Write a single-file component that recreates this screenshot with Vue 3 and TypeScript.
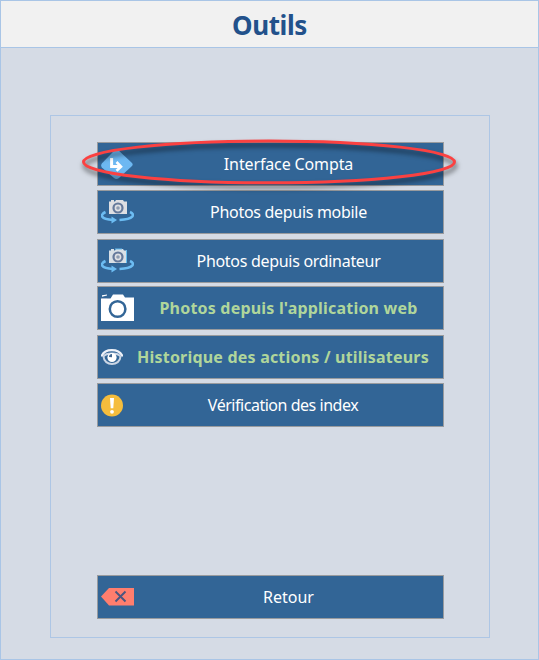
<script setup lang="ts">
interface Tool {
  id: string
  label: string
  icon: 'route' | 'sync' | 'camera' | 'eye' | 'alert'
  strong?: boolean
}

const tools: Tool[] = [
  { id: 'compta', label: 'Interface Compta', icon: 'route' },
  { id: 'mobile', label: 'Photos depuis mobile', icon: 'sync' },
  { id: 'ordinateur', label: 'Photos depuis ordinateur', icon: 'sync' },
  { id: 'web', label: "Photos depuis l'application web", icon: 'camera', strong: true },
  { id: 'historique', label: 'Historique des actions / utilisateurs', icon: 'eye', strong: true },
  { id: 'index', label: 'Vérification des index', icon: 'alert' },
]
</script>

<template>
  <main class="window">
    <header class="title"><h1>Outils</h1></header>
    <section class="panel">
      <nav class="tools">
        <button v-for="tool in tools" :key="tool.id" type="button" class="btn" :class="[tool.id, { strong: tool.strong }]">
          <svg v-if="tool.icon === 'route'" class="icon" viewBox="0 0 33 33">
            <path d="M13.6 2.3Q15.5.7 17.4 2.3L31 15Q32.4 16.500 31 18L18 30Q15.500 32 13 30L.8 19.500Q-.5 17.500.8 15.500Z" fill="#6db8f2" />
            <path d="M10.600 10v8.500h9" fill="none" stroke="#fff" stroke-width="3" />
            <path d="M15.500 14l4.500 4.600-4.500 4.200" fill="none" stroke="#fff" stroke-width="2.600" />
          </svg>
          <svg v-else-if="tool.icon === 'sync'" class="icon" viewBox="0 0 33 33">
            <path d="M8 5.500h2V4h3v1.500h1L15 4h7l1 1.500h3V18H8Z" :fill="tool.id === 'mobile' ? '#dedfe3' : '#d9e0e6'" />
            <path v-if="tool.id === 'ordinateur'" d="M14 4h7M25.500 5v13" stroke="#65bdf0" fill="none" />
            <circle cx="17" cy="12" r="4.500" fill="#dedfe3" stroke="#65799b" stroke-width="2.200" />
            <circle cx="17" cy="12" r="1.800" fill="#8e9cb2" />
            <path d="M4.500 16C-1.500 19-.5 23 12 24M29 16C34.500 18.500 33 23 18.500 24" fill="none" stroke="#6cbcf2" stroke-width="2.600" />
            <path d="M10.500 20.500L16 24l-5.500 3.500Z" fill="#6cbcf2" />
          </svg>
          <svg v-else-if="tool.icon === 'camera'" class="icon" viewBox="0 0 33 33">
            <path d="M0 6.500h9.500L12 2.500h10L24 5.500h9V29H0Z" fill="#fff" />
            <path d="M1 3.300l5-.9v1.200L1 4.800Z" fill="#fff" />
            <path d="M1 6.500h5" stroke="#aab8d0" />
            <circle cx="16.600" cy="17" r="7.800" fill="#fff" stroke="#326596" stroke-width="2.500" />
          </svg>
          <svg v-else-if="tool.icon === 'eye'" class="icon narrow" viewBox="0 0 22 33">
            <path d="M.9 14.500C4 7.300 17.500 7.300 21.100 14.500" fill="none" stroke="#eef1f8" stroke-width="2.200" stroke-linecap="round" />
            <path d="M2.500 15.500C5 11.500 17 11.500 19.500 15.500C19 25.500 3 25.500 2.500 15.500Z" fill="none" stroke="#cbd6e5" stroke-width="2" />
            <circle cx="11" cy="16.500" r="4.600" fill="#fff" />
            <path d="M11 16.300V13a3 3 0 0 0-3 3Z" fill="#40658e" />
          </svg>
          <svg v-else class="icon narrow" viewBox="0 0 22 33">
            <circle cx="11" cy="16.500" r="11" fill="#f5bd3d" />
            <path d="M9 9h4l-.7 10.300H9.700Z" fill="#fff" />
            <circle cx="11" cy="22.800" r="1.900" fill="#fff" />
          </svg>
          <span class="label">{{ tool.label }}</span>
        </button>
        <svg class="highlight" viewBox="0 0 390 64">
          <ellipse cx="194" cy="31.900" rx="185.500" ry="20.900" fill="none" stroke="#fb4141" stroke-width="3" />
        </svg>
      </nav>
      <button type="button" class="btn retour">
        <svg class="icon" viewBox="0 0 33 33">
          <path d="M0 15.500L8 7h25v17.500H8Z" fill="#ff7e6e" />
          <path d="M14.500 10.500l10 10m0-10l-10 10" fill="none" stroke="#4a5680" stroke-width="1.900" />
        </svg>
        <span class="label">Retour</span>
      </button>
    </section>
  </main>
</template>

<style>
body {
  margin: 0;
}
</style>

<style scoped>
.window {
  box-sizing: border-box;
  width: 539px;
  height: 660px;
  border: 1px solid #a9c5e6;
  background: #d5dbe5;
  font-family: "Noto Sans", "DejaVu Sans", sans-serif;
  display: flex;
  flex-direction: column;
}
.title {
  box-sizing: border-box;
  height: 47px;
  border-bottom: 1px solid #a9c5e6;
  background: #f1f1f1;
  display: flex;
  justify-content: center;
  align-items: center;
}
h1 {
  margin: 0;
  padding-top: 1px;
  font-size: 26px;
  line-height: 46px;
  font-weight: 700;
  color: #22518b;
  letter-spacing: -0.4px;
}
.panel {
  box-sizing: border-box;
  width: 440px;
  height: 523px;
  margin: 67px 0 0 49px;
  padding: 26px 45px 18px 46px;
  border: 1px solid #adc6e5;
  display: flex;
  flex-direction: column;
  justify-content: space-between;
}
.tools {
  position: relative;
  display: flex;
  flex-direction: column;
}
.btn {
  box-sizing: border-box;
  width: 347px;
  height: 44px;
  margin: 0 0 4px;
  padding: 0 0 0 3px;
  border: 1px solid #999b9e;
  border-radius: 0;
  background: #326596;
  color: #fff;
  font-family: inherit;
  font-size: 16px;
  display: grid;
  grid-template-columns: auto 1fr;
  align-items: center;
  text-align: center;
}
.btn.compta {
  letter-spacing: -0.13px;
}
.btn.mobile,
.btn.ordinateur {
  letter-spacing: -0.3px;
}
.btn.mobile,
.btn.web {
  margin-bottom: 5px;
}
.btn.ordinateur {
  margin-bottom: 3px;
}
.btn.index {
  letter-spacing: -0.47px;
}
.btn.index,
.btn.retour {
  margin-bottom: 0;
}
.icon {
  display: block;
  width: 33px;
  height: 33px;
}
.icon.narrow {
  width: 22px;
}
.label {
  line-height: 42px;
  white-space: nowrap;
}
.btn.strong {
  color: #b0d69b;
  font-weight: 700;
  letter-spacing: 0.2px;
}
.highlight {
  position: absolute;
  left: -22px;
  top: -12px;
  width: 390px;
  height: 64px;
  overflow: visible;
  pointer-events: none;
  filter: drop-shadow(1px 4px 2.5px rgba(0, 0, 0, 0.6));
}
</style>
